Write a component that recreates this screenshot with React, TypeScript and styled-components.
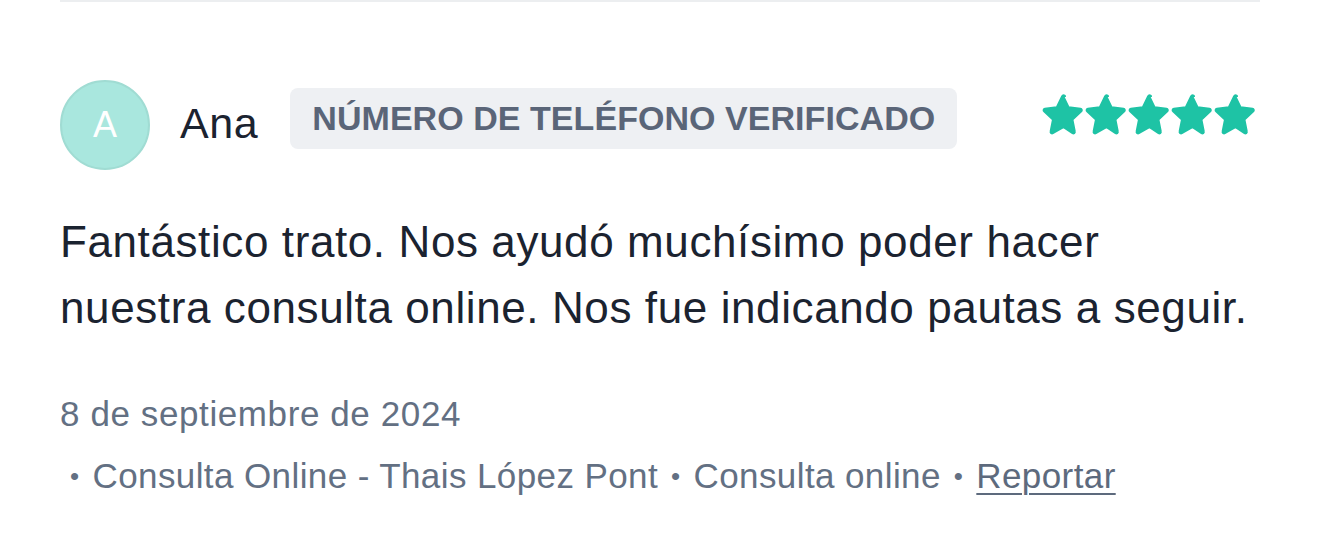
import styled, { createGlobalStyle } from "styled-components";

const GlobalStyle = createGlobalStyle`
  html, body {
    margin: 0;
    padding: 0;
    background: #ffffff;
    font-family: "Liberation Sans", Arial, sans-serif;
  }
`;

const ReviewCard = styled.article`
  box-sizing: border-box;
  width: 1200px;
  margin: 0 0 0 60px;
  border-top: 2px solid #eceef0;
  padding-top: 78px;
  height: 542px;
`;

const Header = styled.div`
  display: flex;
  align-items: flex-start;
`;

const Avatar = styled.div`
  box-sizing: border-box;
  width: 90px;
  height: 90px;
  border-radius: 50%;
  background: #a9e7de;
  border: 2px solid #a0dcd3;
  color: #ffffff;
  font-size: 36px;
  display: flex;
  align-items: center;
  justify-content: center;
`;

const Name = styled.span`
  margin: 19px 0 0 30px;
  font-size: 43px;
  letter-spacing: 0.6px;
  font-weight: 500;
  color: #1b2330;
`;

const Badge = styled.span`
  margin: 8px 0 0 32px;
  height: 61px;
  padding: 0 22px;
  display: flex;
  align-items: center;
  background: #eef0f3;
  border-radius: 8px;
  font-size: 34px;
  letter-spacing: 0.05px;
  font-weight: 700;
  color: #5a6578;
`;

const Stars = styled.div`
  margin: 13px 3px 0 auto;
  display: flex;
`;

const Body = styled.p`
  margin: 39px 0 0;
  font-size: 44px;
  letter-spacing: 0.6px;
  line-height: 66px;
  color: #1b2330;
`;

const DateLine = styled.div`
  margin-top: 53px;
  font-size: 35px;
  letter-spacing: 0.6px;
  color: #637083;
`;

const Meta = styled.div`
  margin-top: 22px;
  font-size: 35px;
  letter-spacing: 0.4px;
  color: #637083;
  display: flex;
  align-items: baseline;
  gap: 13px;
`;

const Sep = styled.span<{ $first?: boolean }>`
  font-size: 26px;
  margin-left: ${(p) => (p.$first ? "10px" : "0")};
  position: relative;
  top: -3px;
`;

const ReportLink = styled.a`
  color: #5d6a7d;
  text-decoration: underline;
  text-underline-offset: 5px;
  text-decoration-thickness: 2px;
`;

const Star = () => (
  <svg width="43" height="43" viewBox="0 0 24 24">
    <path
      d="M12 1.8l2.9 6.1 6.6.8c.8.1 1.1 1.1.5 1.6l-4.9 4.6 1.3 6.6c.2.8-.7 1.4-1.4 1L12 19.2l-5.9 3.3c-.7.4-1.6-.2-1.4-1L6 14.9 1.1 10.3c-.6-.5-.3-1.5.5-1.6l6.6-.8L11.1 1.8c.4-.8 1.5-.8 1.9 0z"
      fill="#1ec3a5"
      stroke="#1ec3a5"
      strokeWidth="0.9"
      strokeLinejoin="round"
    />
  </svg>
);

const App = () => (
  <>
    <GlobalStyle />
    <ReviewCard>
      <Header>
        <Avatar>A</Avatar>
        <Name>Ana</Name>
        <Badge>NÚMERO DE TELÉFONO VERIFICADO</Badge>
        <Stars>
          {[0, 1, 2, 3, 4].map((i) => (
            <Star key={i} />
          ))}
        </Stars>
      </Header>
      <Body>
        Fantástico trato. Nos ayudó muchísimo poder hacer
        <br />
        nuestra consulta online. Nos fue indicando pautas a seguir.
      </Body>
      <DateLine>8 de septiembre de 2024</DateLine>
      <Meta>
        <Sep $first>•</Sep>
        <span>Consulta Online - Thais López Pont</span>
        <Sep>•</Sep>
        <span>Consulta online</span>
        <Sep>•</Sep>
        <ReportLink href="#">Reportar</ReportLink>
      </Meta>
    </ReviewCard>
  </>
);

export default App;
